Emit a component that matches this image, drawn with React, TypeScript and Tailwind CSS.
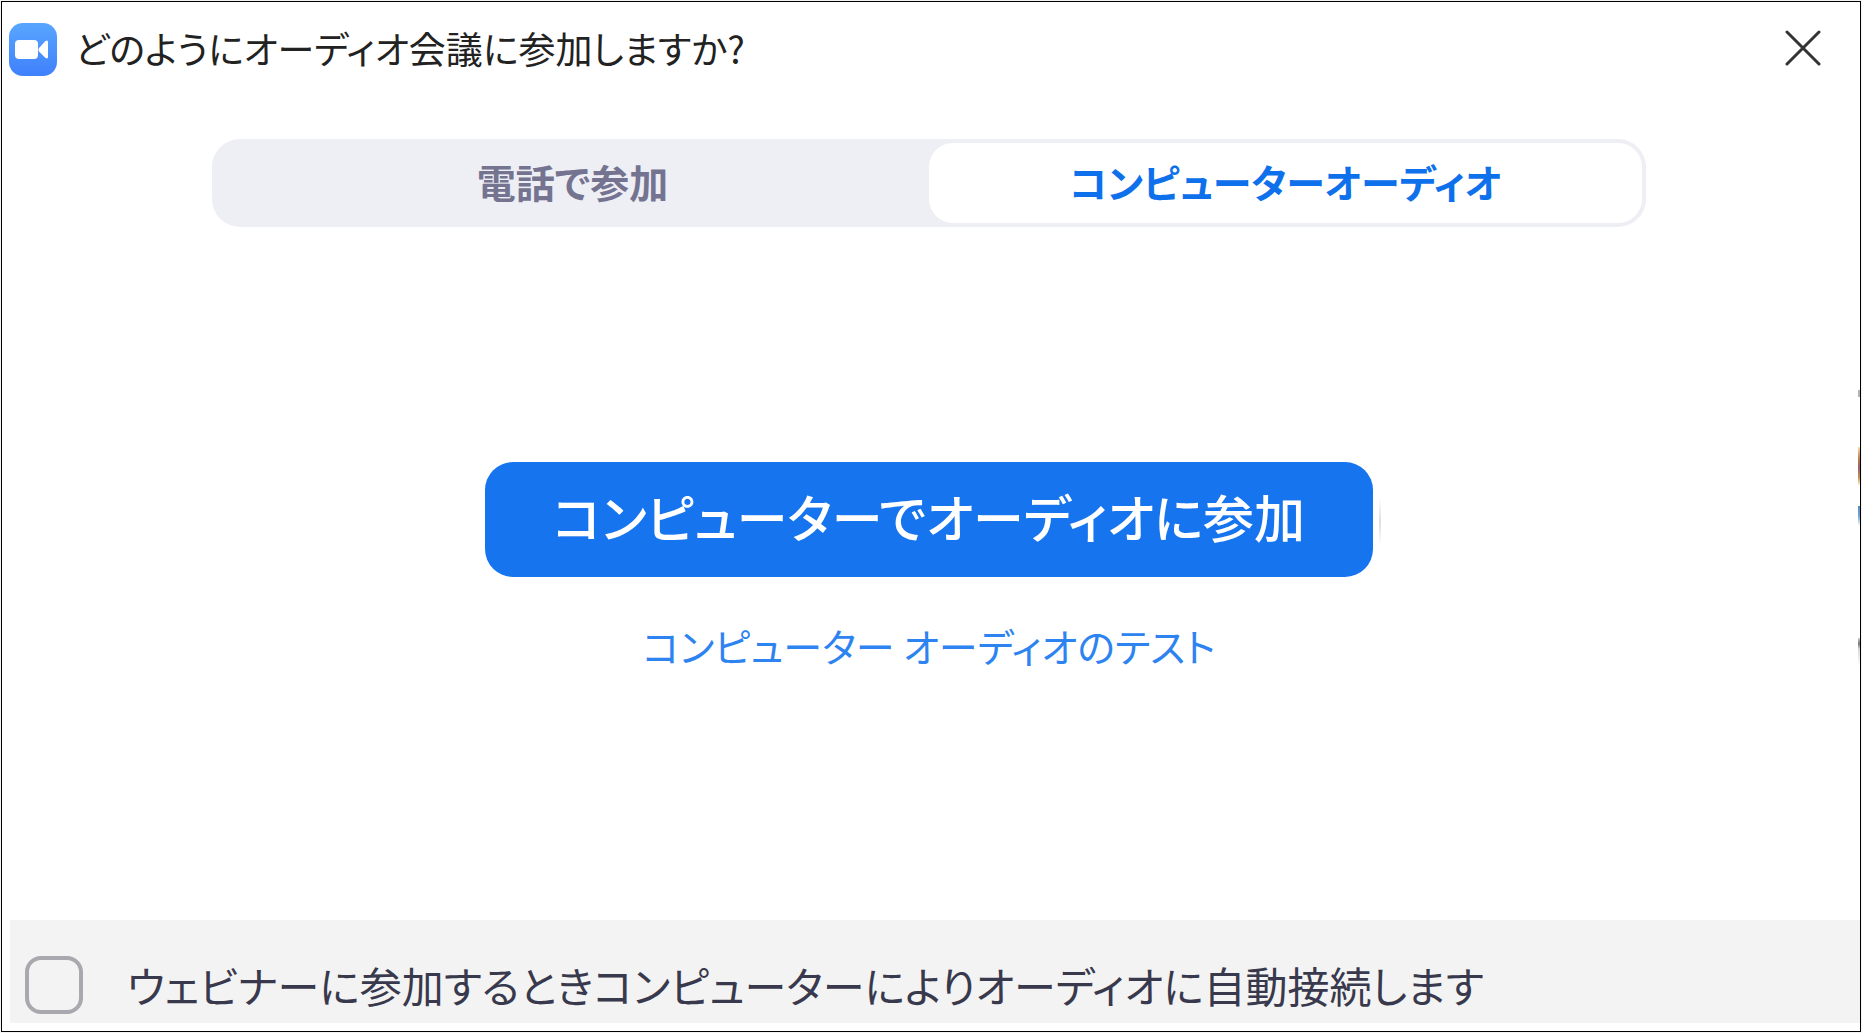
import { useState } from 'react';

type Tab = 'phone' | 'computer';

const TABS: { id: Tab; label: string }[] = [
  { id: 'phone', label: '電話で参加' },
  { id: 'computer', label: 'コンピューターオーディオ' },
];

function ZoomLogo() {
  return (
    <svg className="w-12 h-14 shrink-0" viewBox="0 0 48 56" aria-hidden="true">
      <defs>
        <linearGradient id="logo-bg" x1="0" y1="0" x2="0" y2="1">
          <stop offset="0" stopColor="#58a6ff" />
          <stop offset="1" stopColor="#3f80fc" />
        </linearGradient>
      </defs>
      <rect x="0" y="3" width="48" height="53" rx="14" fill="url(#logo-bg)" />
      <rect x="6" y="20" width="23" height="19" rx="4" fill="#fff" />
      <path d="M30 28 36 21.500Q39 19 39 22.500V36.500Q39 40 36 37.500L30 31.500Q28.500 29.800 30 28Z" fill="#fff" />
    </svg>
  );
}

// Sliver of the window that sits behind the dialog
function BackgroundSliver() {
  return (
    <svg className="absolute right-0 top-[386px] w-0.5 h-72" viewBox="0 0 2 288" preserveAspectRatio="none" aria-hidden="true">
      <defs>
        <linearGradient id="sliver-warm" x1="0" y1="0" x2="0" y2="1">
          <stop offset="0" stopColor="#f8dcae" />
          <stop offset="0.300" stopColor="#bd8149" />
          <stop offset="0.550" stopColor="#9b606c" />
          <stop offset="0.800" stopColor="#c6904f" />
          <stop offset="1" stopColor="#fdf0d8" />
        </linearGradient>
        <linearGradient id="sliver-blue" x1="0" y1="0" x2="0" y2="1">
          <stop offset="0" stopColor="#5a8abd" />
          <stop offset="0.500" stopColor="#6ea3d0" />
          <stop offset="1" stopColor="#ffffff" />
        </linearGradient>
        <linearGradient id="sliver-gray" x1="0" y1="0" x2="0" y2="1">
          <stop offset="0" stopColor="#d0d0d0" />
          <stop offset="0.200" stopColor="#777777" />
          <stop offset="0.400" stopColor="#d8d8d8" />
          <stop offset="1" stopColor="#ffffff" />
        </linearGradient>
      </defs>
      <rect y="2" width="2" height="7" fill="#b4b4b4" />
      <rect y="59" width="2" height="38" fill="url(#sliver-warm)" />
      <rect y="118" width="2" height="20" fill="url(#sliver-blue)" />
      <rect y="250" width="2" height="28" fill="url(#sliver-gray)" />
    </svg>
  );
}

export default function App() {
  const [tab, setTab] = useState<Tab>('computer');
  const [autoJoin, setAutoJoin] = useState(false);

  return (
    <div
      lang="ja"
      className="min-h-screen flex p-px bg-[#f4f4f4] font-['Noto_Sans_CJK_JP',sans-serif] [font-feature-settings:'palt']"
    >
      <main className="relative flex-1 min-w-0 flex flex-col border border-black bg-white">
        <BackgroundSliver />

        <header className="flex items-center pt-[18px] pl-[7px] pr-[37px]">
          <ZoomLogo />
          <h1 className="ml-[18px] text-[37px] leading-[56px] text-[#222222]">どのようにオーディオ会議に参加しますか?</h1>
          <button type="button" aria-label="閉じる" className="ml-auto p-0.5">
            <svg className="w-9 h-9" viewBox="0 0 36 36" fill="none" stroke="#333333" strokeWidth="3" strokeLinecap="round" aria-hidden="true">
              <path d="M2 2 34 34M34 2 2 34" />
            </svg>
          </button>
        </header>

        <div className="flex-1 flex flex-col items-center pr-1">
          <div role="tablist" className="mt-[63px] w-full max-w-[1434px] grid grid-cols-2 p-1 rounded-[28px] bg-[#eeeef5]">
            {TABS.map((t) => (
              <button
                key={t.id}
                type="button"
                role="tab"
                aria-selected={tab === t.id}
                onClick={() => setTab(t.id)}
                className={
                  tab === t.id
                    ? 'h-20 pb-1 rounded-3xl bg-white text-[39px] leading-[56px] font-bold text-[#0e71eb]'
                    : 'h-20 pb-1 rounded-3xl text-[39px] leading-[56px] font-bold text-[#747491]'
                }
              >
                {t.label}
              </button>
            ))}
          </div>

          <div className="relative mt-[235px]">
            <button
              type="button"
              className="w-[888px] h-[115px] pb-2 rounded-[28px] bg-[#1574ee] text-[51px] leading-[72px] font-medium text-white"
            >
              コンピューターでオーディオに参加
            </button>
            {/* faint shadow off the button's edge */}
            <span className="absolute -right-2 top-9 w-0.5 h-12 bg-linear-to-b from-white via-[#dedede] to-white" />
          </div>
          <a href="#audio-test" className="mt-9 text-[39px] leading-[64px] text-[#2d83f0]">
            コンピューター オーディオのテスト
          </a>
        </div>

        <footer className="ml-2 mb-2 bg-[#f3f3f3]">
          <label className="flex items-center gap-11 h-[103px] pt-[26px] pl-[15px]">
            <input
              type="checkbox"
              checked={autoJoin}
              onChange={(e) => setAutoJoin(e.target.checked)}
              className="appearance-none shrink-0 w-[58px] h-[58px] rounded-2xl border-4 border-[#a8a8ae] bg-[#f3f3f3] checked:bg-[#1574ee]"
            />
            <span className="text-[42px] leading-[72px] text-[#39394d]">
              ウェビナーに参加するときコンピューターによりオーディオに自動接続します
            </span>
          </label>
        </footer>
      </main>
    </div>
  );
}
